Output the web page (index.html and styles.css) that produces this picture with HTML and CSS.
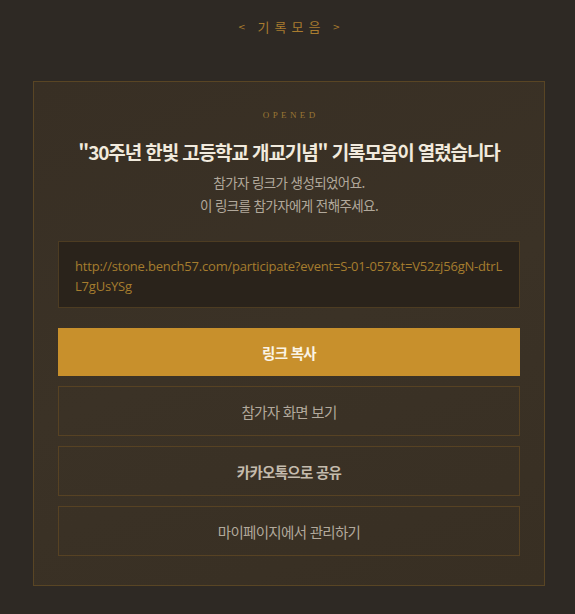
FILE: index.html
```html
<!DOCTYPE html>
<html lang="ko">
<head>
<meta charset="utf-8">
<title>기록모음</title>
<link rel="stylesheet" href="styles.css">
</head>
<body>
<div class="page">
  <header class="top">
    <span class="arrow">&lt;</span>
    <span class="top-title">기록모음</span>
    <span class="arrow">&gt;</span>
  </header>
  <section class="card">
    <div class="status">OPENED</div>
    <h1 class="title">"30주년 한빛 고등학교 개교기념" 기록모음이 열렸습니다</h1>
    <p class="desc">참가자 링크가 생성되었어요.<br>이 링크를 참가자에게 전해주세요.</p>
    <div class="link-box">http://stone.bench57.com/participate?event=S-01-057&amp;t=V52zj56gN-dtrLL7gUsYSg</div>
    <div class="actions">
      <button class="btn btn-primary">링크 복사</button>
      <button class="btn btn-outline">참가자 화면 보기</button>
      <button class="btn btn-outline btn-strong">카카오톡으로 공유</button>
      <button class="btn btn-outline">마이페이지에서 관리하기</button>
    </div>
  </section>
</div>
</body>
</html>
```

FILE: styles.css
```css
* { box-sizing: border-box; }
html, body { margin: 0; padding: 0; }
body {
  background: #2e2924;
  font-family: "Noto Sans CJK KR", "Noto Sans", sans-serif;
  color: #b5ab9e;
}
.page {
  padding: 0 30px 0 33px;
}
.top {
  display: flex;
  justify-content: center;
  align-items: center;
  gap: 12px;
  padding: 18px 0 45px;
  line-height: 18px;
  height: 81px;
  color: #a97c2f;
}
.arrow {
  font-family: "DejaVu Sans", sans-serif;
  font-size: 9px;
}
.top-title {
  font-size: 13px;
  letter-spacing: 5px;
  margin-right: -5px;
}
.card {
  border: 1px solid #594524;
  background: linear-gradient(160deg, #382f24 0%, #3b3226 50%, #382f23 100%);
  padding: 24px 24px 29px;
  text-align: center;
}
.status {
  font-family: "Liberation Serif", serif;
  font-size: 9px;
  line-height: 18px;
  letter-spacing: 3.4px;
  margin-right: -3.4px;
  color: #9a7634;
}
.title {
  margin: 15px 0 0;
  font-size: 19px;
  line-height: 26px;
  font-weight: 700;
  letter-spacing: -1.1px;
  color: #f1eadd;
}
.desc {
  margin: 6px 0 0;
  font-size: 13.5px;
  line-height: 23px;
  letter-spacing: -0.6px;
  color: #b1a89b;
}
.link-box {
  margin-top: 24px;
  border: 1px solid #4d3c22;
  background: #2a231b;
  padding: 14px 16px 11px;
  text-align: left;
  font-family: "Open Sans", sans-serif;
  font-size: 13px;
  line-height: 20px;
  letter-spacing: -0.2px;
  color: #a67d2e;
  word-break: break-all;
}
.actions {
  margin-top: 20px;
  display: flex;
  flex-direction: column;
  gap: 10px;
}
.btn {
  display: flex;
  align-items: center;
  justify-content: center;
  width: 100%;
  margin: 0;
  font-family: "Noto Sans CJK KR", "Noto Sans", sans-serif;
  font-size: 14.5px;
  letter-spacing: -0.7px;
  cursor: pointer;
}
.btn-primary {
  height: 48px;
  border: none;
  background: #c8902c;
  color: #fbf4e6;
  font-weight: 700;
}
.btn-outline {
  height: 50px;
  border: 1px solid #574223;
  background: transparent;
  color: #b2a99c;
  font-weight: 400;
}
.btn-strong {
  font-weight: 700;
  color: #c4bbad;
}
```
